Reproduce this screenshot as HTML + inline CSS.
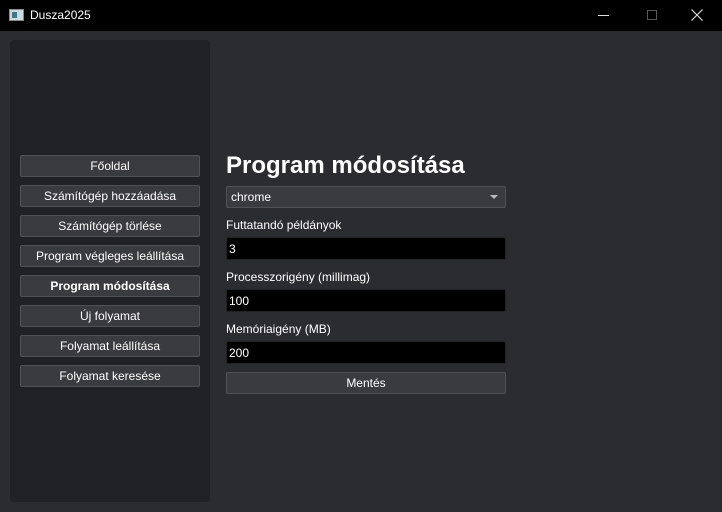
<!DOCTYPE html>
<html><head><meta charset="utf-8"><style>
*{box-sizing:border-box;margin:0;padding:0}
body{width:722px;height:512px;background:#2b2c30;font-family:"Liberation Sans",sans-serif;color:#fff;position:relative;overflow:hidden;font-size:12px}
.tb{position:absolute;left:0;top:0;width:722px;height:31px;background:#000;}
.tb .t{position:absolute;left:30px;top:8px;font-size:12px}
.ic{position:absolute;left:9px;top:9px;width:15px;height:12px;background:#cfd8dc;border:1px solid #888}
.ic:after{content:"";position:absolute;left:2px;top:2px;width:5px;height:6px;background:#3a7a8a}
.side{position:absolute;left:10px;top:40px;width:200px;height:462px;background:#202124;border-radius:4px}
.b{position:absolute;left:20px;width:180px;height:22px;background:#3a3b3f;border:1px solid #505155;border-radius:2px;text-align:center;line-height:21px;font-size:12px}
h1{position:absolute;left:226px;top:152px;font-size:24px;font-weight:bold}
.cb{position:absolute;left:226px;top:186px;width:280px;height:22px;background:#3a3b3f;border:1px solid #505155;border-radius:2px;padding-left:4px;line-height:21px}
.cb:after{content:"";position:absolute;right:7px;top:8px;border:4px solid transparent;border-top:4px solid #bbb}
.l{position:absolute;left:226px;font-size:12px}
.in{position:absolute;left:226px;width:280px;height:23px;background:#000;border:1px solid #222;border-radius:2px;padding-left:2px;line-height:23px}
</style></head><body>
<div class="tb"><div class="ic"></div><div class="t">Dusza2025</div>
<div style="position:absolute;left:598px;top:15px;width:11px;height:1px;background:#ddd"></div>
<div style="position:absolute;left:647px;top:10px;width:10px;height:10px;border:1px solid #555"></div>
<svg style="position:absolute;left:691px;top:9px" width="12" height="12"><path d="M0.5 0.5L11.5 11.5M11.5 0.5L0.5 11.5" stroke="#ddd" stroke-width="1.2"/></svg></div>
<div class="side"></div>
<div class="b" style="top:155px">Főoldal</div>
<div class="b" style="top:185px">Számítógép hozzáadása</div>
<div class="b" style="top:215px">Számítógép törlése</div>
<div class="b" style="top:245px">Program végleges leállítása</div>
<div class="b" style="top:275px;font-weight:bold">Program módosítása</div>
<div class="b" style="top:305px">Új folyamat</div>
<div class="b" style="top:335px">Folyamat leállítása</div>
<div class="b" style="top:365px">Folyamat keresése</div>
<h1>Program módosítása</h1>
<div class="cb">chrome</div>
<div class="l" style="top:218px">Futtatandó példányok</div>
<div class="in" style="top:237px">3</div>
<div class="l" style="top:270px">Processzorigény (millimag)</div>
<div class="in" style="top:289px">100</div>
<div class="l" style="top:322px">Memóriaigény (MB)</div>
<div class="in" style="top:341px">200</div>
<div class="b" style="left:226px;width:280px;top:372px">Mentés</div>
</body></html>
